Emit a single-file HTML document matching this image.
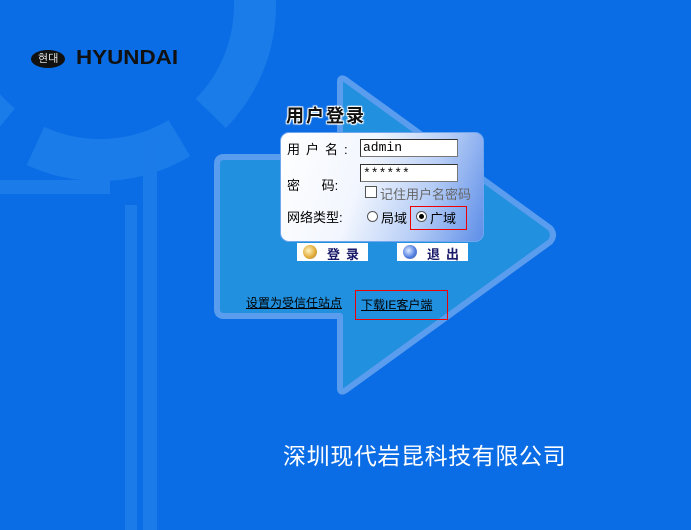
<!DOCTYPE html>
<html><head><meta charset="utf-8"><style>
body{margin:0;width:691px;height:530px;overflow:hidden;background:#0b6de5;position:relative;font-family:"Liberation Sans","Noto Sans CJK SC",sans-serif}
.a{position:absolute}
.lbl{font-size:13px;color:#000}
</style></head><body>
<svg class="a" style="left:0;top:0" width="691" height="530">
 <circle cx="100" cy="5" r="155" fill="none" stroke="#1a7ce9" stroke-width="42" stroke-dasharray="150 40" stroke-dashoffset="30"/>
 <rect x="0" y="180" width="110" height="14" fill="#1a7be9"/>
 <rect x="143" y="140" width="14" height="390" fill="#1a7be9"/>
 <rect x="125" y="205" width="12" height="325" fill="#1a7be9"/>
 <path d="M340 82 Q340 76 346 80 L550 228 Q556 235 550 242 L346 390 Q340 394 340 388 L340 316 L224 316 Q217 316 217 309 L217 164 Q217 157 224 157 L340 157 Z" fill="#2190de" stroke="#5a9ced" stroke-width="6" stroke-linejoin="round"/>
</svg>
<div class="a" style="left:31px;top:50px;width:34px;height:18px;border-radius:50%;background:#111;color:#fff;font-size:11px;line-height:18px;text-align:center;font-family:'NanumGothic',sans-serif">현대</div>
<div class="a" style="left:76px;top:47px;font-size:20px;font-weight:bold;color:#111;font-family:'Liberation Sans',sans-serif;transform:scaleX(1.12);transform-origin:left">HYUNDAI</div>
<div class="a" style="left:286px;top:102px;font-size:18px;font-weight:bold;color:#111;letter-spacing:2px;text-shadow:0 0 2px #fff,1px 1px 1px #fff,-1px -1px 1px #fff,1px -1px 1px #fff,-1px 1px 1px #fff">用户登录</div>
<div class="a" style="left:280px;top:132px;width:202px;height:108px;border-radius:9px;border:1px solid #6fa6ee;background:linear-gradient(110deg,#fff 0%,#f2f6fe 40%,#b7cef6 70%,#5e8ee8 100%)"></div>
<div class="a lbl" style="left:287px;top:139px;letter-spacing:6px">用户名:</div>
<div class="a lbl" style="left:287px;top:175px">密&nbsp;&nbsp;&nbsp;&nbsp;&nbsp;&nbsp;码:</div>
<div class="a lbl" style="left:287px;top:207px">网络类型:</div>
<div class="a" style="left:360px;top:139px;width:94px;height:16px;border:1px solid #777;border-top-color:#333;border-left-color:#333;background:#fff;font:13px 'Liberation Mono',monospace;line-height:16px;padding-left:2px">admin</div>
<div class="a" style="left:360px;top:164px;width:94px;height:16px;border:1px solid #777;border-top-color:#333;border-left-color:#333;background:#fff;font:13px 'Liberation Mono',monospace;line-height:18px;padding-left:2px">******</div>
<div class="a" style="left:365px;top:186px;width:10px;height:10px;border:1px solid #555;background:#fff"></div>
<div class="a" style="left:380px;top:184px;font-size:13px;color:#666">记住用户名密码</div>
<div class="a" style="left:367px;top:211px;width:9px;height:9px;border-radius:50%;border:1px solid #555;background:#fff"></div>
<div class="a lbl" style="left:381px;top:208px">局域</div>
<div class="a" style="left:410px;top:206px;width:55px;height:22px;border:1px solid #e00"></div>
<div class="a" style="left:416px;top:211px;width:9px;height:9px;border-radius:50%;border:1px solid #555;background:#fff"></div>
<div class="a" style="left:419px;top:214px;width:5px;height:5px;border-radius:50%;background:#000"></div>
<div class="a lbl" style="left:430px;top:208px">广域</div>
<div class="a" style="left:297px;top:243px;width:71px;height:18px;background:#fff"></div>
<div class="a" style="left:303px;top:245px;width:14px;height:14px;border-radius:50%;background:radial-gradient(circle at 40% 40%,#fff3c0,#e0a830 60%,#888 100%)"></div>
<div class="a" style="left:327px;top:244px;font-size:13px;font-weight:bold;color:#1a1a6a;letter-spacing:6px">登录</div>
<div class="a" style="left:397px;top:243px;width:71px;height:18px;background:#fff"></div>
<div class="a" style="left:403px;top:245px;width:14px;height:14px;border-radius:50%;background:radial-gradient(circle at 40% 40%,#e0ecff,#4a78e0 60%,#777 100%)"></div>
<div class="a" style="left:427px;top:244px;font-size:13px;font-weight:bold;color:#1a1a6a;letter-spacing:6px">退出</div>
<div class="a" style="left:246px;top:294px;font-size:12px;color:#000;text-decoration:underline">设置为受信任站点</div>
<div class="a" style="left:355px;top:290px;width:91px;height:28px;border:1px solid #e00"></div>
<div class="a" style="left:361px;top:296px;font-size:12px;color:#000;text-decoration:underline">下载IE客户端</div>
<div class="a" style="left:283px;top:437px;font-size:23px;color:#fff;letter-spacing:0.6px">深圳现代岩昆科技有限公司</div>
</body></html>
